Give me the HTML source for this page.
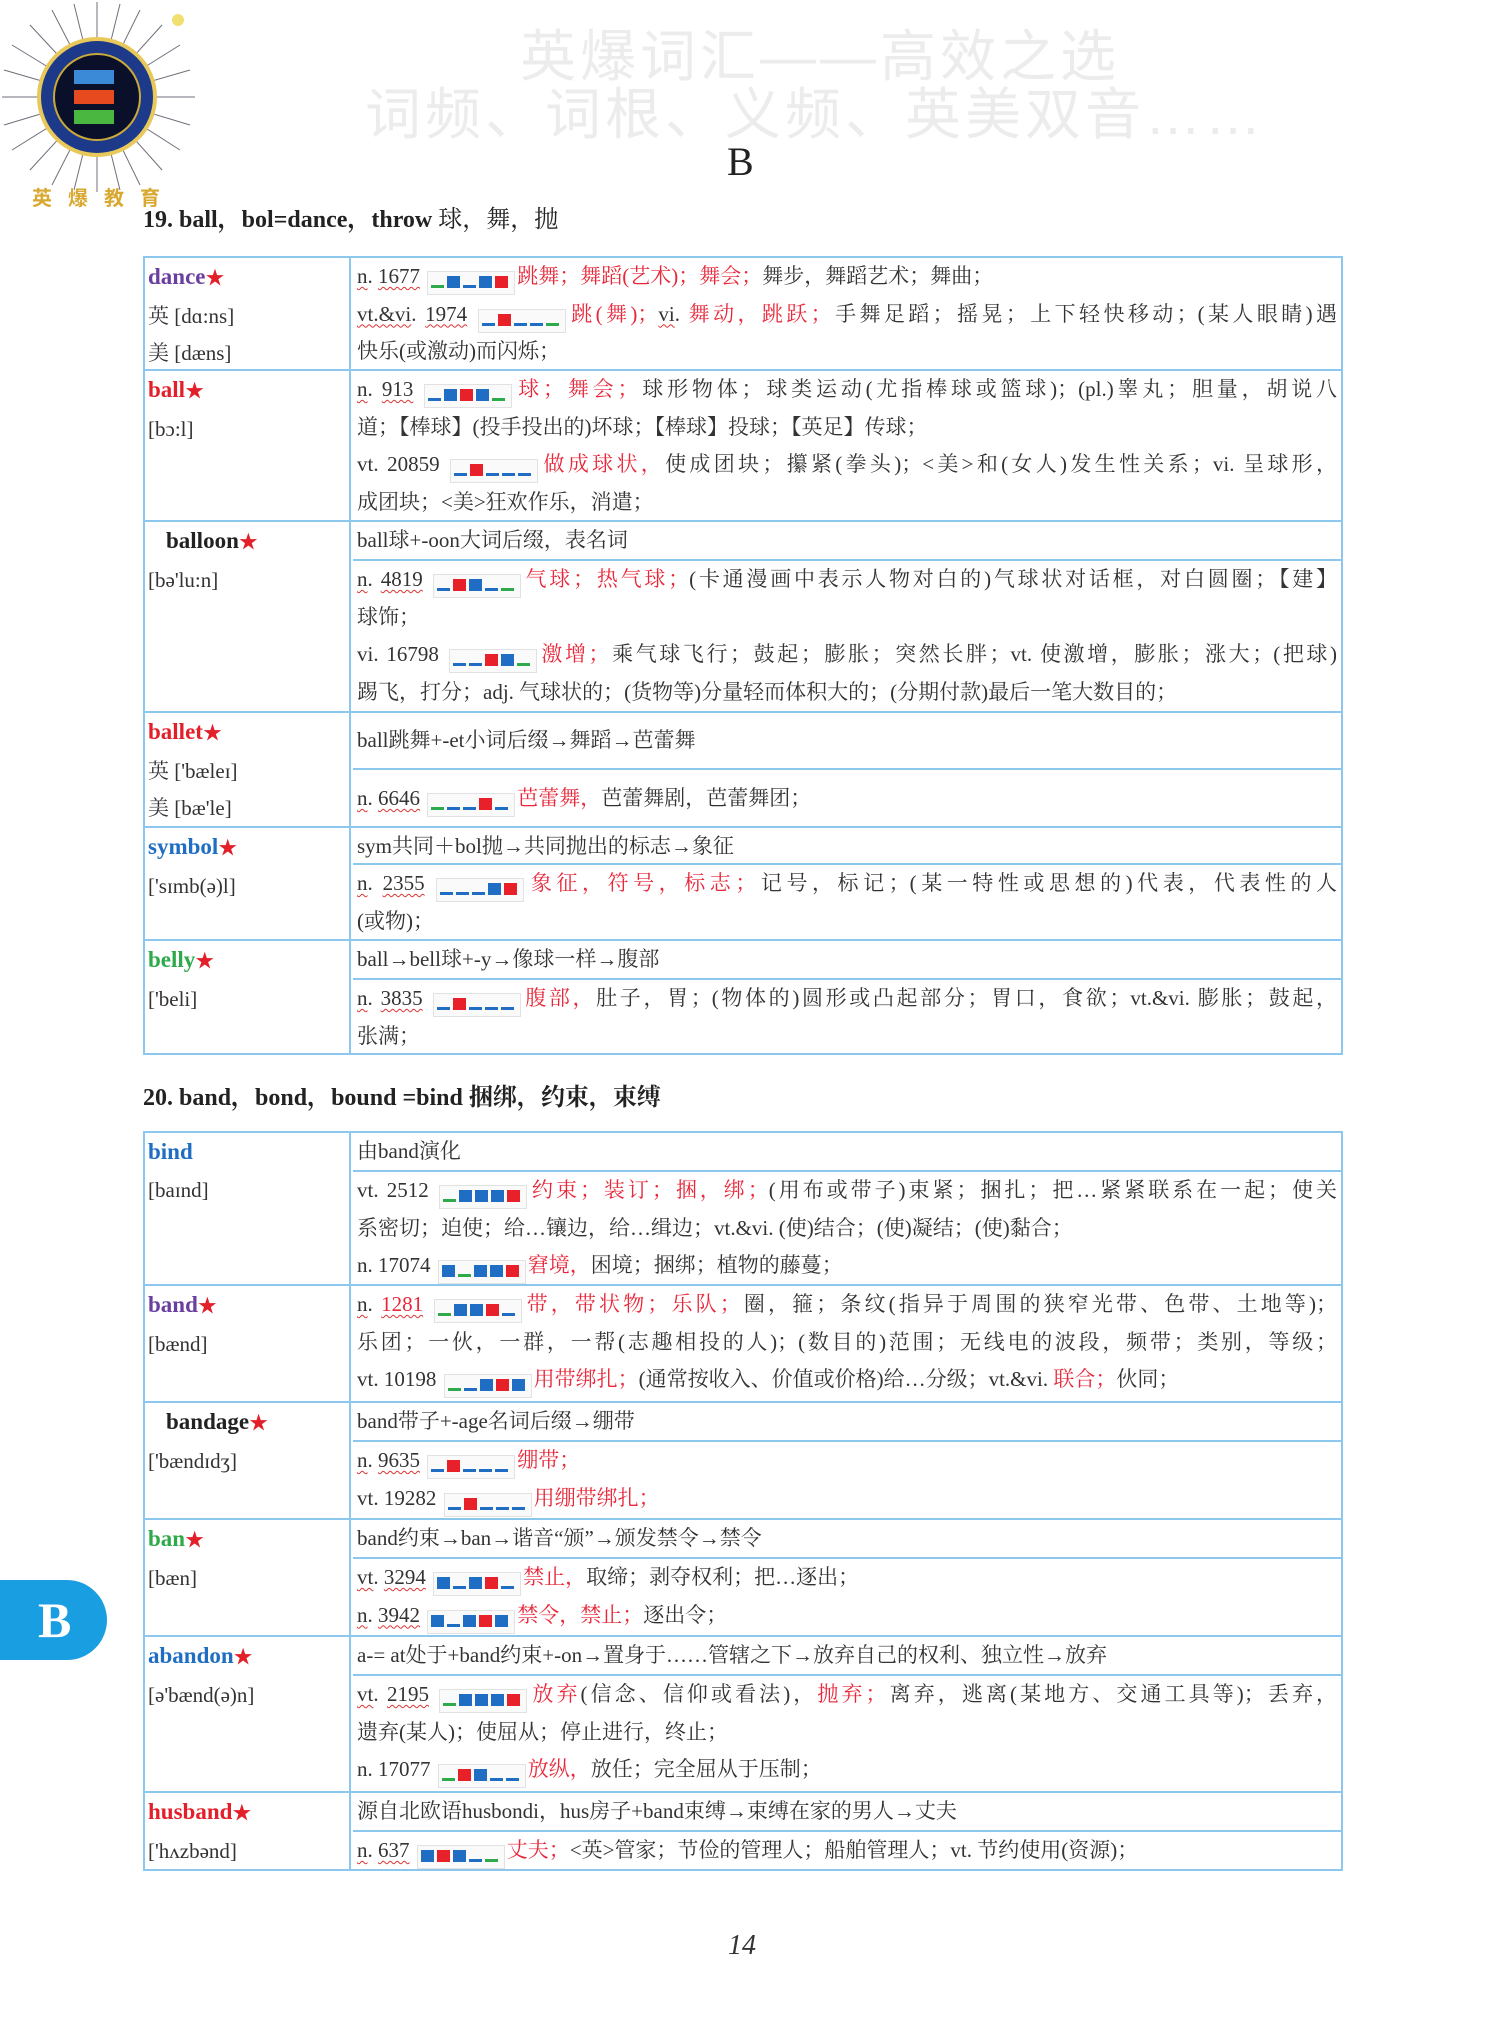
<!DOCTYPE html>
<html><head><meta charset="utf-8"><style>
*{margin:0;padding:0;box-sizing:border-box}
body{width:1500px;height:2036px;background:#fff;position:relative;overflow:hidden;font-family:"Liberation Serif","Noto Serif CJK SC",serif;color:#333;font-size:21px}
.wm{position:absolute;color:#ececec;font-family:"Liberation Sans","Noto Sans CJK SC",sans-serif;font-size:56px;white-space:nowrap;letter-spacing:4px}
.h{position:absolute;left:143px;font-weight:bold;font-size:24px;color:#222;white-space:nowrap}
.tb{position:absolute;left:143px;width:1200px}
.r{position:absolute;left:0;width:1200px;border:2px solid #8cc8ee;border-bottom:none}
.r.last{border-bottom:2px solid #8cc8ee}
.l{position:absolute;left:0;top:0;width:206px;height:100%;border-right:2px solid #8cc8ee;padding-left:3px;line-height:37.7px}
.c{position:absolute;left:208px;right:0;top:0;height:100%;padding:0 4px 0 4px;line-height:37.7px}
.s{border-bottom:2px solid #8cc8ee;margin:0 -4px;padding:0 4px}
.j{text-align:justify;text-align-last:justify;white-space:nowrap}
.n{white-space:nowrap}
.w{font-weight:bold;font-size:23px}
.st{color:#e3202a;font-size:19px}
.red{color:#e8283a}
.u{text-decoration:underline wavy #d33;text-decoration-thickness:1px;text-underline-offset:3px}
.f{display:inline-flex;align-items:flex-end;gap:3px;width:88px;height:24px;border:1px solid #e2e2e2;background:#fafafa;padding:0 3px 6px;vertical-align:-5px;margin:0 2px}
.f i{display:block;width:13px}
.f i.d{height:3px}.f i.t{height:12px}
.g{background:#2eaa4a}.b{background:#1f6ec4}.x{background:#e8202a}
</style></head><body>

<svg style="position:absolute;left:0;top:0" width="200" height="215" viewBox="0 0 200 215">
<g stroke="#334" stroke-width="1" opacity=".7">
<line x1="97" y1="97" x2="97" y2="2"/><line x1="97" y1="97" x2="140" y2="10"/><line x1="97" y1="97" x2="180" y2="45"/><line x1="97" y1="97" x2="195" y2="97"/><line x1="97" y1="97" x2="180" y2="150"/><line x1="97" y1="97" x2="140" y2="185"/><line x1="97" y1="97" x2="97" y2="192"/><line x1="97" y1="97" x2="52" y2="185"/><line x1="97" y1="97" x2="12" y2="150"/><line x1="97" y1="97" x2="2" y2="97"/><line x1="97" y1="97" x2="12" y2="45"/><line x1="97" y1="97" x2="52" y2="10"/>
<line x1="97" y1="97" x2="120" y2="4"/><line x1="97" y1="97" x2="162" y2="25"/><line x1="97" y1="97" x2="190" y2="70"/><line x1="97" y1="97" x2="190" y2="125"/><line x1="97" y1="97" x2="162" y2="170"/><line x1="97" y1="97" x2="120" y2="190"/><line x1="97" y1="97" x2="74" y2="190"/><line x1="97" y1="97" x2="30" y2="170"/><line x1="97" y1="97" x2="4" y2="125"/><line x1="97" y1="97" x2="4" y2="70"/><line x1="97" y1="97" x2="30" y2="25"/><line x1="97" y1="97" x2="74" y2="4"/>
</g>
<circle cx="97" cy="97" r="60" fill="#e9c85a"/>
<circle cx="97" cy="97" r="56" fill="#1d3a8a"/>
<circle cx="97" cy="97" r="44" fill="#c9a93a"/>
<circle cx="97" cy="97" r="42" fill="#0a0f2a"/>
<rect x="74" y="70" width="40" height="14" fill="#3a8ad8"/>
<rect x="74" y="90" width="40" height="14" fill="#e84a20"/>
<rect x="74" y="110" width="40" height="14" fill="#4ab840"/>
<circle cx="178" cy="20" r="6" fill="#f0e070"/>
<text x="32" y="205" font-family="Noto Sans CJK SC,sans-serif" font-size="20" font-weight="bold" fill="#d8a830" letter-spacing="16">英爆教育</text>
</svg>

<div class="wm" style="left:520px;top:12px">英爆词汇——高效之选</div>
<div class="wm" style="left:365px;top:70px;letter-spacing:4px">词频、词根、义频、英美双音……</div>
<div style="position:absolute;left:727px;top:138px;font-size:40px;color:#222">B</div>

<div class="h" style="top:199px">19. ball，bol=dance，throw <span style="font-weight:normal">球，舞，抛</span></div>

<div class="tb" style="top:256px">
<div class="r" style="top:0;height:113px"><div class="l"><span class="w" style="color:#6a3fa0">dance</span><span class="st">★</span><br>英 [dɑ:ns]<br>美 [dæns]</div>
<div class="c"><div class="n"><span class="u">n</span>. <span class="u">1677</span> <span class="f"><i class="g d"></i><i class="b t"></i><i class="b d"></i><i class="b t"></i><i class="x t"></i></span><span class="red">跳舞；舞蹈(艺术)；舞会；</span>舞步，舞蹈艺术；舞曲；</div>
<div class="j"><span class="u">vt.&amp;vi</span>. <span class="u">1974</span> <span class="f"><i class="b d"></i><i class="x t"></i><i class="b d"></i><i class="b d"></i><i class="g d"></i></span><span class="red">跳(舞)；</span><span class="u">vi</span>. <span class="red">舞动，跳跃；</span>手舞足蹈；摇晃；上下轻快移动；(某人眼睛)遇</div>
<div>快乐(或激动)而闪烁；</div></div></div>

<div class="r" style="top:113px;height:151px"><div class="l"><span class="w" style="color:#e3202a">ball</span><span class="st">★</span><br>[bɔ:l]</div>
<div class="c"><div class="j"><span class="u">n</span>. <span class="u">913</span> <span class="f"><i class="b d"></i><i class="b t"></i><i class="x t"></i><i class="b t"></i><i class="g d"></i></span><span class="red">球；舞会；</span>球形物体；球类运动(尤指棒球或篮球)；(pl.)睾丸；胆量，胡说八</div>
<div>道；【棒球】(投手投出的)坏球；【棒球】投球；【英足】传球；</div>
<div class="j">vt. 20859 <span class="f"><i class="b d"></i><i class="x t"></i><i class="b d"></i><i class="b d"></i><i class="b d"></i></span><span class="red">做成球状，</span>使成团块；攥紧(拳头)；&lt;美&gt;和(女人)发生性关系；vi. 呈球形，</div>
<div>成团块；&lt;美&gt;狂欢作乐，消遣；</div></div></div>

<div class="r" style="top:264px;height:191px"><div class="l"><span class="w" style="color:#222;margin-left:18px">balloon</span><span class="st">★</span><br>[bə'lu:n]</div>
<div class="c"><div class="s" style="height:39px">ball球+-oon大词后缀，表名词</div>
<div class="j"><span class="u">n</span>. <span class="u">4819</span> <span class="f"><i class="b d"></i><i class="x t"></i><i class="b t"></i><i class="b d"></i><i class="g d"></i></span><span class="red">气球；热气球；</span>(卡通漫画中表示人物对白的)气球状对话框，对白圆圈；【建】</div>
<div>球饰；</div>
<div class="j">vi. 16798 <span class="f"><i class="b d"></i><i class="b d"></i><i class="x t"></i><i class="b t"></i><i class="g d"></i></span><span class="red">激增；</span>乘气球飞行；鼓起；膨胀；突然长胖；vt. 使激增，膨胀；涨大；(把球)</div>
<div>踢飞，打分；adj. 气球状的；(货物等)分量轻而体积大的；(分期付款)最后一笔大数目的；</div></div></div>

<div class="r" style="top:455px;height:115px"><div class="l"><span class="w" style="color:#e3202a">ballet</span><span class="st">★</span><br>英 ['bæleɪ]<br>美 [bæ'le]</div>
<div class="c"><div class="s" style="height:57px;line-height:55px">ball跳舞+-et小词后缀→舞蹈→芭蕾舞</div>
<div style="line-height:56px"><span class="u">n</span>. <span class="u">6646</span> <span class="f"><i class="g d"></i><i class="b d"></i><i class="b d"></i><i class="x t"></i><i class="b d"></i></span><span class="red">芭蕾舞，</span>芭蕾舞剧，芭蕾舞团；</div></div></div>

<div class="r" style="top:570px;height:113px"><div class="l"><span class="w" style="color:#1f6ec4">symbol</span><span class="st">★</span><br>['sɪmb(ə)l]</div>
<div class="c"><div class="s" style="height:37px">sym共同＋bol抛→共同抛出的标志→象征</div>
<div class="j"><span class="u">n</span>. <span class="u">2355</span> <span class="f"><i class="b d"></i><i class="b d"></i><i class="b d"></i><i class="b t"></i><i class="x t"></i></span><span class="red">象征，符号，标志；</span>记号，标记；(某一特性或思想的)代表，代表性的人</div>
<div>(或物)；</div></div></div>

<div class="r last" style="top:683px;height:116px"><div class="l"><span class="w" style="color:#2eaa4a">belly</span><span class="st">★</span><br>['beli]</div>
<div class="c"><div class="s" style="height:39px">ball→bell球+-y→像球一样→腹部</div>
<div class="j"><span class="u">n</span>. <span class="u">3835</span> <span class="f"><i class="b d"></i><i class="x t"></i><i class="b d"></i><i class="b d"></i><i class="b d"></i></span><span class="red">腹部，</span>肚子，胃；(物体的)圆形或凸起部分；胃口，食欲；vt.&amp;vi. 膨胀；鼓起，</div>
<div>张满；</div></div></div>
</div>

<div class="h" style="top:1077px">20. band，bond，bound =bind 捆绑，约束，束缚</div>

<div class="tb" style="top:1131px">
<div class="r" style="top:0;height:153px"><div class="l"><span class="w" style="color:#1f6ec4">bind</span><br>[baɪnd]</div>
<div class="c"><div class="s" style="height:39px">由band演化</div>
<div class="j">vt. 2512 <span class="f"><i class="g d"></i><i class="b t"></i><i class="b t"></i><i class="b t"></i><i class="x t"></i></span><span class="red">约束；装订；捆，绑；</span>(用布或带子)束紧；捆扎；把…紧紧联系在一起；使关</div>
<div>系密切；迫使；给…镶边，给…缉边；vt.&amp;vi. (使)结合；(使)凝结；(使)黏合；</div>
<div>n. 17074 <span class="f"><i class="b t"></i><i class="g d"></i><i class="b t"></i><i class="b t"></i><i class="x t"></i></span><span class="red">窘境，</span>困境；捆绑；植物的藤蔓；</div></div></div>

<div class="r" style="top:153px;height:117px"><div class="l"><span class="w" style="color:#6a3fa0">band</span><span class="st">★</span><br>[bænd]</div>
<div class="c"><div class="j"><span class="u">n</span>. <span class="u red">1281</span> <span class="f"><i class="g d"></i><i class="b t"></i><i class="b t"></i><i class="x t"></i><i class="b d"></i></span><span class="red">带，带状物；乐队；</span>圈，箍；条纹(指异于周围的狭窄光带、色带、土地等)；</div>
<div class="j">乐团；一伙，一群，一帮(志趣相投的人)；(数目的)范围；无线电的波段，频带；类别，等级；</div>
<div>vt. 10198 <span class="f"><i class="g d"></i><i class="b d"></i><i class="b t"></i><i class="x t"></i><i class="b t"></i></span><span class="red">用带绑扎；</span>(通常按收入、价值或价格)给…分级；vt.&amp;vi. <span class="red">联合；</span>伙同；</div></div></div>

<div class="r" style="top:270px;height:117px"><div class="l"><span class="w" style="color:#222;margin-left:18px">bandage</span><span class="st">★</span><br>['bændɪdʒ]</div>
<div class="c"><div class="s" style="height:39px">band带子+-age名词后缀→绷带</div>
<div><span class="u">n</span>. <span class="u">9635</span> <span class="f"><i class="b d"></i><i class="x t"></i><i class="b d"></i><i class="b d"></i><i class="b d"></i></span><span class="red">绷带；</span></div>
<div>vt. 19282 <span class="f"><i class="b d"></i><i class="x t"></i><i class="b d"></i><i class="b d"></i><i class="b d"></i></span><span class="red">用绷带绑扎；</span></div></div></div>

<div class="r" style="top:387px;height:117px"><div class="l"><span class="w" style="color:#2eaa4a">ban</span><span class="st">★</span><br>[bæn]</div>
<div class="c"><div class="s" style="height:39px">band约束→ban→谐音“颁”→颁发禁令→禁令</div>
<div><span class="u">vt</span>. <span class="u">3294</span> <span class="f"><i class="b t"></i><i class="b d"></i><i class="b t"></i><i class="x t"></i><i class="b d"></i></span><span class="red">禁止，</span>取缔；剥夺权利；把…逐出；</div>
<div><span class="u">n</span>. <span class="u">3942</span> <span class="f"><i class="b t"></i><i class="b d"></i><i class="b t"></i><i class="x t"></i><i class="b t"></i></span><span class="red">禁令，禁止；</span>逐出令；</div></div></div>

<div class="r" style="top:504px;height:156px"><div class="l"><span class="w" style="color:#1f6ec4">abandon</span><span class="st">★</span><br>[ə'bænd(ə)n]</div>
<div class="c"><div class="s" style="height:39px">a-= at处于+band约束+-on→置身于……管辖之下→放弃自己的权利、独立性→放弃</div>
<div class="j"><span class="u">vt</span>. <span class="u">2195</span> <span class="f"><i class="g d"></i><i class="b t"></i><i class="b t"></i><i class="b t"></i><i class="x t"></i></span><span class="red">放弃</span>(信念、信仰或看法)，<span class="red">抛弃；</span>离弃，逃离(某地方、交通工具等)；丢弃，</div>
<div>遗弃(某人)；使屈从；停止进行，终止；</div>
<div>n. 17077 <span class="f"><i class="g d"></i><i class="x t"></i><i class="b t"></i><i class="b d"></i><i class="b d"></i></span><span class="red">放纵，</span>放任；完全屈从于压制；</div></div></div>

<div class="r last" style="top:660px;height:80px"><div class="l"><span class="w" style="color:#e3202a">husband</span><span class="st">★</span><br>['hʌzbənd]</div>
<div class="c"><div class="s" style="height:39px">源自北欧语husbondi，hus房子+band束缚→束缚在家的男人→丈夫</div>
<div><span class="u">n</span>. <span class="u">637</span> <span class="f"><i class="b t"></i><i class="x t"></i><i class="b t"></i><i class="b d"></i><i class="g d"></i></span><span class="red">丈夫；</span>&lt;英&gt;管家；节俭的管理人；船舶管理人；vt. 节约使用(资源)；</div></div></div>
</div>

<div style="position:absolute;left:0;top:1580px;width:107px;height:80px;background:#1a9ee2;border-radius:0 40px 40px 0;color:#fff;font-size:50px;font-weight:bold;line-height:80px;padding-left:38px">B</div>

<div style="position:absolute;left:728px;top:1930px;font-size:28px;font-style:italic;color:#333">14</div>
</body></html>
